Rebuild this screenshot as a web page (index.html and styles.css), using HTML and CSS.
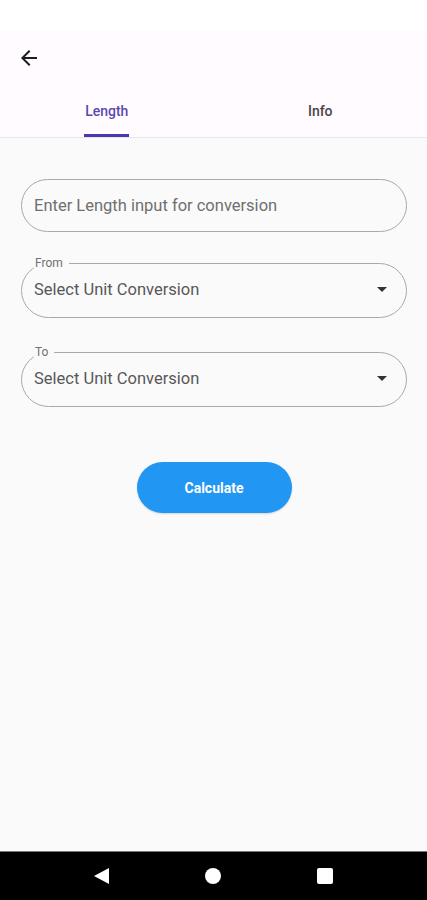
FILE: index.html
```html
<!DOCTYPE html>
<html lang="en">
<head>
    <meta charset="UTF-8">
    <meta name="viewport" content="width=device-width, initial-scale=1.0">
    <title>Length Converter</title>
    <link rel="stylesheet" href="styles.css">
</head>
<body>
    <div class="status-bar"></div>

    <header class="app-bar">
        <div class="toolbar">
            <button class="back-btn" aria-label="Back">
                <svg width="24" height="24" viewBox="0 0 24 24">
                    <path d="M20 11H7.83l5.59-5.59L12 4l-8 8 8 8 1.41-1.41L7.83 13H20v-2z" fill="#1c1b1f"/>
                </svg>
            </button>
        </div>
        <nav class="tabs">
            <div class="tab active"><span class="tab-label">Length</span></div>
            <div class="tab"><span class="tab-label">Info</span></div>
        </nav>
    </header>

    <main class="content">
        <div class="field">
            <input class="field-input" type="text" placeholder="Enter Length input for conversion">
        </div>

        <fieldset class="select-field">
            <legend>From</legend>
            <div class="select-row">
                <span>Select Unit Conversion</span>
                <span class="caret"></span>
            </div>
        </fieldset>

        <fieldset class="select-field">
            <legend>To</legend>
            <div class="select-row">
                <span>Select Unit Conversion</span>
                <span class="caret"></span>
            </div>
        </fieldset>

        <div class="actions">
            <button class="calc-btn">Calculate</button>
        </div>
    </main>

    <footer class="nav-bar">
        <span class="nav-back"></span>
        <span class="nav-home"></span>
        <span class="nav-recent"></span>
    </footer>
</body>
</html>
```

FILE: styles.css
```css
* {
    box-sizing: border-box;
}
body {
    margin: 0;
    height: 900px;
    display: flex;
    flex-direction: column;
    font-family: Roboto, "Noto Sans", sans-serif;
    background: #fafafa;
}
.status-bar {
    height: 30px;
    background: #fff;
}
.app-bar {
    background: #fffbfe;
    border-bottom: 1px solid #e8e6ea;
}
.toolbar {
    height: 56px;
    display: flex;
    align-items: center;
    padding-left: 17px;
}
.back-btn {
    border: none;
    background: none;
    padding: 0;
    width: 24px;
    height: 24px;
    display: flex;
}
.tabs {
    display: flex;
    height: 51px;
}
.tab {
    flex: 1;
    display: flex;
    flex-direction: column;
    align-items: center;
    padding-top: 16px;
}
.tab-label {
    font-size: 14px;
    font-weight: 500;
    line-height: 18px;
    color: #49454f;
    padding: 0 1px 14px;
    border-bottom: 3px solid transparent;
}
.tab.active .tab-label {
    color: #5a48b0;
    border-bottom-color: #5134b0;
}
.content {
    flex: 1;
    padding: 41px 20px 0 21px;
}
.field {
    height: 53px;
    border: 1px solid #a9a9a9;
    border-radius: 27px;
    display: flex;
    align-items: center;
    padding: 0 12px;
}
.field-input {
    border: none;
    background: transparent;
    outline: none;
    width: 100%;
    padding: 0;
    font-family: inherit;
    font-size: 16.5px;
    color: #333;
}
.field-input::placeholder {
    color: #6f6f6f;
}
.select-field {
    margin: 24px 0 0;
    padding: 0 12px;
    height: 62px;
    border: 1px solid #a9a9a9;
    border-radius: 28px;
}
.select-field + .select-field {
    margin-top: 27px;
}
.select-field legend {
    font-size: 12px;
    color: #707070;
    padding: 0 6px 0 1px;
    line-height: 14px;
}
.select-row {
    display: flex;
    align-items: center;
    justify-content: space-between;
    height: 38px;
    font-size: 16.5px;
    color: #585858;
}
.caret {
    width: 0;
    height: 0;
    border-left: 5px solid transparent;
    border-right: 5px solid transparent;
    border-top: 5px solid #333;
    margin-right: 7px;
}
.actions {
    display: flex;
    justify-content: center;
    margin-top: 55px;
}
.calc-btn {
    width: 155px;
    height: 51px;
    border: none;
    border-radius: 26px;
    background: #2196f3;
    color: #fff;
    font-family: inherit;
    font-size: 14px;
    font-weight: 700;
    box-shadow: 0 1px 2px rgba(0, 0, 0, 0.15);
}
.nav-bar {
    height: 49px;
    background: #000;
    border-top: 1px solid #777;
    display: flex;
    align-items: center;
    justify-content: center;
    gap: 96px;
}
.nav-back {
    width: 0;
    height: 0;
    border-top: 8px solid transparent;
    border-bottom: 8px solid transparent;
    border-right: 15px solid #fff;
}
.nav-home {
    width: 16px;
    height: 16px;
    border-radius: 50%;
    background: #fff;
}
.nav-recent {
    width: 16px;
    height: 16px;
    border-radius: 2px;
    background: #fff;
}
```
